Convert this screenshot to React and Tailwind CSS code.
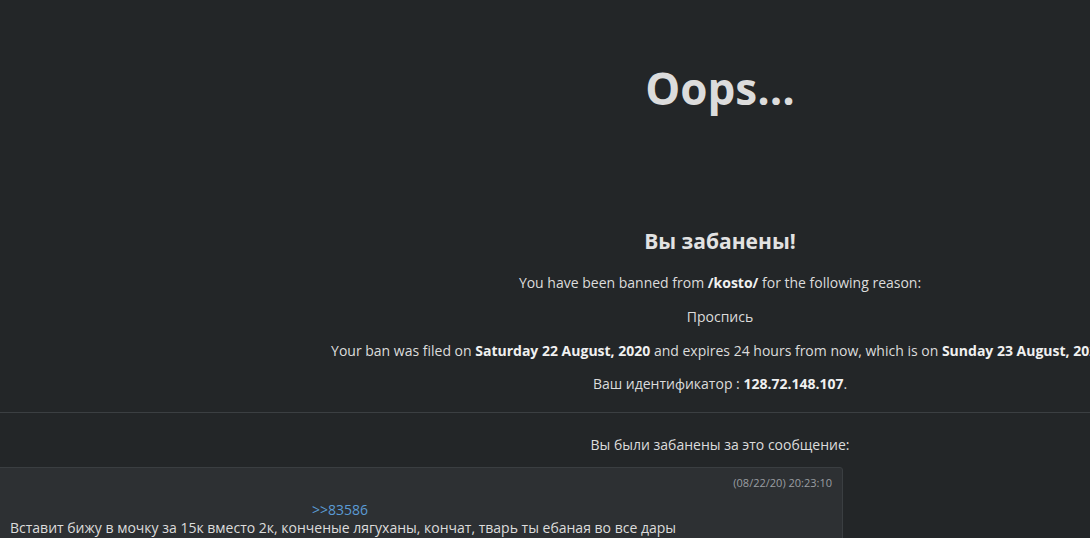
import React from "react";

const Bold = ({ children }) => <strong className="font-bold text-[#f0f0f0]">{children}</strong>;

const App = () => {
  return (
    <div
      className="min-h-screen w-full overflow-hidden bg-[#232628] text-[#dcdcdc] text-[14px] leading-[20px]"
      style={{ fontFamily: '"Open Sans", "Noto Sans", sans-serif' }}
    >
      <div className="w-[1440px] text-center">
        {/* Header */}
        <h1 className="pt-[62px] text-[44px] leading-[52px] font-bold text-[#dcdcdc]">Oops...</h1>

        <h2 className="mt-[113px] text-[21px] leading-[28px] font-bold text-[#e2e2e2]">Вы забанены!</h2>

        <p className="mt-[18px]">
          You have been banned from <Bold>/kosto/</Bold> for the following reason:
        </p>
        <p className="mt-[14px]">Проспись</p>
        <p className="mt-[14px] whitespace-nowrap">
          Your ban was filed on <Bold>Saturday 22 August, 2020</Bold> and expires 24 hours from now, which is on{" "}
          <Bold>Sunday 23 August, 2020</Bold>.
        </p>
        <p className="mt-[13px]">
          Ваш идентификатор : <Bold>128.72.148.107</Bold>.
        </p>
      </div>

      <hr className="mt-[18px] border-0 border-t border-[#3b3f42]" />

      <div className="w-[1440px] text-center">
        <p className="mt-[22px]">Вы были забанены за это сообщение:</p>
      </div>

      {/* Post */}
      <div className="mt-[12px] ml-[-2px] w-[845px] h-[90px] bg-[#2d3033] border border-[#3a3e41] rounded-tr-[3px] text-left">
        <div className="pt-[7px] pr-[10px] text-right text-[11px] leading-[16px] text-[#9a9ea2]">(08/22/20) 20:23:10</div>
        <div className="mt-[9px] pl-[313px] text-[#5b9bd5]">&gt;&gt;83586</div>
        <div className="pl-[11px] -mt-[2px]">
          Вставит бижу в мочку за 15к вместо 2к, конченые лягуханы, кончат, тварь ты ебаная во все дары
        </div>
      </div>
    </div>
  );
};

export default App;
